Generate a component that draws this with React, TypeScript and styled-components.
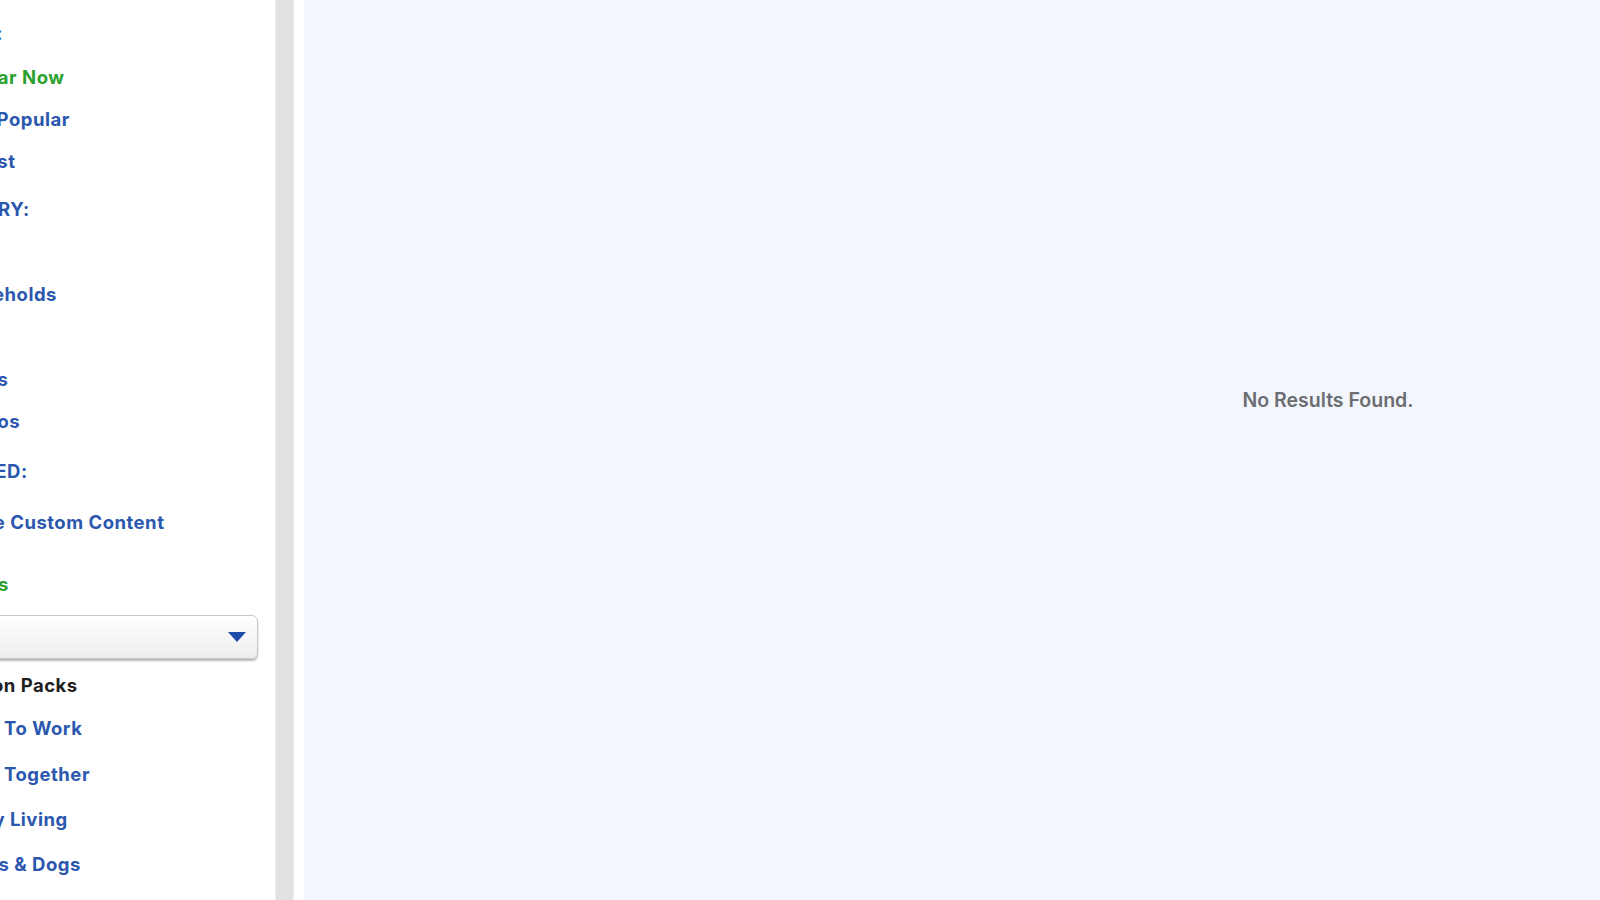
import React from "react";
import styled, { createGlobalStyle } from "styled-components";

const GlobalStyle = createGlobalStyle`
  html, body {
    margin: 0;
    padding: 0;
    height: 100%;
    overflow: hidden;
  }
  body {
    font-family: Inter, "Open Sans", "Liberation Sans", sans-serif;
  }
`;

const BLUE = "#2b57ae";
const GREEN = "#2da12f";

const Page = styled.div`
  display: flex;
  height: 100vh;
  overflow: hidden;
  background: #ffffff;
`;

const Sidebar = styled.aside`
  flex: 0 0 275px;
  overflow: hidden;
  background: #ffffff;
`;

// the panel is scrolled sideways, so its left part sits outside the view
const SidebarInner = styled.div`
  display: flex;
  flex-direction: column;
  width: 420px;
  margin-left: -78px;
  padding-top: 12px;
`;

const ScrollTrack = styled.div`
  flex: 0 0 17px;
  background: #e1e1e1;
  border-left: 1px solid #ececec;
  border-right: 1px solid #ececec;
`;

const Gutter = styled.div`
  flex: 0 0 10px;
  background: #ffffff;
`;

const Main = styled.main`
  flex: 1;
  overflow: hidden;
  display: flex;
  justify-content: flex-start;
  background: #f3f6fd;
`;

const Results = styled.div`
  flex: 0 0 2048px;
  padding-top: 388px;
  text-align: center;
`;

const Empty = styled.p`
  margin: 0;
  font-size: 19.5px;
  line-height: 24px;
  font-weight: 600;
  color: #6b6d71;
`;

const Heading = styled.h3<{ $top?: number; $indent?: number }>`
  margin: ${({ $top = 0 }) => $top}px 0 0 ${({ $indent = 0 }) => $indent}px;
  height: 42px;
  line-height: 42px;
  font-size: 18.5px;
  font-weight: 700;
  letter-spacing: 0.5px;
  color: ${BLUE};
  text-transform: uppercase;
  white-space: nowrap;
`;

const Option = styled.a<{ $active?: boolean; $top?: number; $height?: number; $indent?: number }>`
  display: flex;
  align-items: center;
  gap: 8px;
  margin-top: ${({ $top = 0 }) => $top}px;
  margin-left: ${({ $indent = 0 }) => $indent}px;
  height: ${({ $height = 42 }) => $height}px;
  font-size: 18.5px;
  font-weight: 700;
  letter-spacing: 0.5px;
  color: ${({ $active }) => ($active ? GREEN : BLUE)};
  white-space: nowrap;
  text-decoration: none;
  cursor: pointer;
`;

const Radio = styled.span<{ $active?: boolean }>`
  flex: 0 0 14px;
  height: 14px;
  box-sizing: border-box;
  border-radius: 50%;
  border: 2px solid ${({ $active }) => ($active ? GREEN : BLUE)};
  background: ${({ $active }) => ($active ? GREEN : "transparent")};
`;

const Check = styled.span`
  flex: 0 0 16px;
  height: 16px;
  box-sizing: border-box;
  border: 2px solid ${BLUE};
  border-radius: 3px;
`;

const SubHeading = styled.div`
  margin: 5px 0 0 -5px;
  height: 42px;
  line-height: 42px;
  font-size: 18.5px;
  font-weight: 700;
  letter-spacing: 0.5px;
  color: #1f1f1f;
  white-space: nowrap;
`;

const Select = styled.button`
  display: flex;
  align-items: center;
  justify-content: flex-end;
  margin: 10px 0 0 20px;
  width: 316px;
  height: 44px;
  padding: 0 11px 0 0;
  box-sizing: border-box;
  border: 1px solid #c9c9c9;
  border-radius: 6px;
  background: linear-gradient(#ffffff, #ededed);
  box-shadow: 0 2px 2px rgba(0, 0, 0, 0.28);
  cursor: pointer;
`;

const Caret = () => (
  <svg width="18" height="10" viewBox="0 0 18 10">
    <path d="M0 0 H18 L9 10 Z" fill="#1d4ca8" />
  </svg>
);

const sorts = ["Popular Now", "Most Popular", "Newest"];
const categories: [string, number][] = [
  ["All", 0],
  ["Households", 0],
  ["Lots", 0],
  ["Rooms", 0],
  ["Photos", 10],
];
const packs = ["Get To Work", "Get Together", "City Living", "Cats & Dogs"];

export default function App() {
  return (
    <Page>
      <GlobalStyle />
      <Sidebar>
        <SidebarInner>
          <Heading $indent={-9}>Sort By:</Heading>
          {sorts.map((label, i) => (
            <Option key={label} $active={i === 0} $top={i === 0 ? 2 : 0}>
              <Radio $active={i === 0} />
              {label}
            </Option>
          ))}
          <Heading $top={6} $indent={-4}>Category:</Heading>
          {categories.map(([label, indent]) => (
            <Option key={label} $height={42.5} $indent={indent}>
              <Radio />
              {label}
            </Option>
          ))}
          <Heading $top={7}>Included:</Heading>
          <Option $top={9} $indent={-11}>
            <Check />
            Include Custom Content
          </Option>
          <Option $active $top={20} $indent={8}>
            <Radio $active />
            Packs
          </Option>
          <Select aria-label="Pack type">
            <Caret />
          </Select>
          <SubHeading>Expansion Packs</SubHeading>
          {packs.map((label, i) => (
            <Option key={label} $indent={20} $height={i === 1 ? 46 : 45}>
              <Check />
              {label}
            </Option>
          ))}
        </SidebarInner>
      </Sidebar>
      <ScrollTrack />
      <Gutter />
      <Main>
        <Results>
          <Empty>No Results Found.</Empty>
        </Results>
      </Main>
    </Page>
  );
}
